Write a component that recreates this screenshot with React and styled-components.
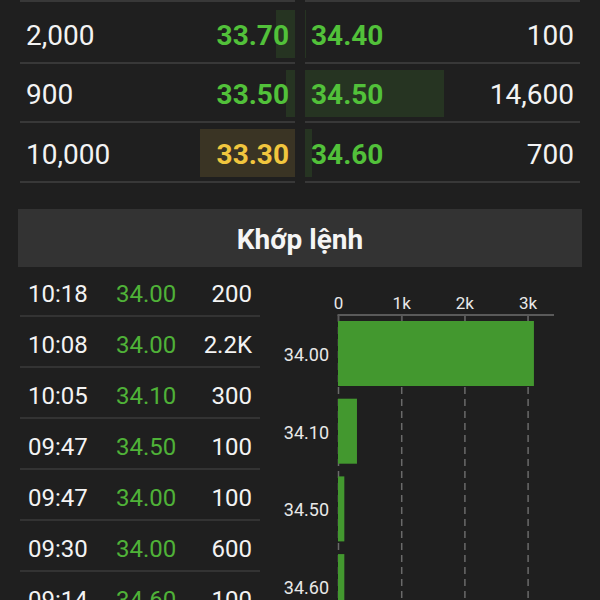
import React from "react";
import styled, { createGlobalStyle } from "styled-components";

const GlobalStyle = createGlobalStyle`
  *, *::before, *::after {
    box-sizing: border-box;
  }
  html, body {
    margin: 0;
    padding: 0;
    background: #1f1f1f;
    font-family: Roboto, "Noto Sans", sans-serif;
    overflow: hidden;
  }
`;

const colors = {
  bg: "#1f1f1f",
  line: "#383838",
  white: "#f3f3f3",
  green: "#52c13a",
  tradeGreen: "#4fb238",
  yellow: "#f1c63e",
  bidBar: "#263422",
  warnBar: "#3a3424",
  header: "#333333",
  bar: "#43982f",
};

const book = [
  { bidVol: 2000, bid: "33.70", ask: "34.40", askVol: 100 },
  { bidVol: 900, bid: "33.50", ask: "34.50", askVol: 14600 },
  { bidVol: 10000, bid: "33.30", ask: "34.60", askVol: 700, ref: true },
];

const trades = [
  ["10:18", "34.00", "200"],
  ["10:08", "34.00", "2.2K"],
  ["10:05", "34.10", "300"],
  ["09:47", "34.50", "100"],
  ["09:47", "34.00", "100"],
  ["09:30", "34.00", "600"],
  ["09:14", "34.60", "100"],
];

const volumeByPrice = [
  { price: "34.00", vol: 3100 },
  { price: "34.10", vol: 300 },
  { price: "34.50", vol: 100 },
  { price: "34.60", vol: 100 },
];

const fmt = (n) => n.toLocaleString("en-US");

const Page = styled.div`
  width: 600px;
  height: 600px;
  overflow: hidden;
  padding: 0 20px;
  background: ${colors.bg};
  color: ${colors.white};
`;

const Book = styled.div`
  display: grid;
  grid-template-columns: 1fr 1fr;
  column-gap: 10px;
`;

const Side = styled.div`
  border-top: 2px solid ${colors.line};
  padding-top: 2px;
`;

const BookRow = styled.div`
  position: relative;
  height: 59.5px;
  border-bottom: 2px solid ${colors.line};
  display: flex;
  align-items: center;
  justify-content: space-between;
  padding: 5px 6px 0;
  font-size: 28px;
`;

const DepthBar = styled.div`
  position: absolute;
  top: 6px;
  bottom: 4px;
  ${(p) => (p.$side === "bid" ? "right: 0;" : "left: 0;")}
  background: ${(p) => (p.$ref ? colors.warnBar : colors.bidBar)};
`;

const Vol = styled.span`
  position: relative;
  color: ${colors.white};
`;

const Price = styled.span`
  position: relative;
  font-weight: 700;
  color: ${(p) => (p.$ref ? colors.yellow : colors.green)};
`;

const SectionTitle = styled.div`
  margin: 26px -2px 0;
  height: 58px;
  background: ${colors.header};
  display: flex;
  align-items: center;
  justify-content: center;
  padding-top: 3px;
  font-size: 28px;
  font-weight: 700;
  color: #f5f5f5;
`;

const Body = styled.div`
  display: flex;
`;

const TradeList = styled.div`
  width: 240px;
  flex: none;
`;

const TradeRow = styled.div`
  height: 50.9px;
  border-bottom: 2px solid #333333;
  display: grid;
  grid-template-columns: 88px 1fr auto;
  align-items: center;
  padding: 7px 8px 0;
  font-size: 24px;
`;

const TradeTime = styled.span`
  color: ${colors.white};
`;

const TradePrice = styled.span`
  color: ${colors.tradeGreen};
`;

const TradeVol = styled.span`
  color: ${colors.white};
  text-align: right;
`;

const Chart = styled.svg`
  display: block;
  flex: none;
  font-family: Roboto, "Noto Sans", sans-serif;
`;

function VolumeChart() {
  const x0 = 78.5;
  const perK = 63.2;
  const ticks = [0, 1, 2, 3];
  return (
    <Chart width="320" height="333" viewBox="0 0 320 333">
      {ticks.map((t) => (
        <text
          key={t}
          x={x0 + t * perK}
          y="42"
          textAnchor="middle"
          fontSize="17"
          fill="#e8e8e8"
        >
          {t === 0 ? "0" : `${t}k`}
        </text>
      ))}
      {ticks.map((t) => (
        <line
          key={`g${t}`}
          x1={x0 + t * perK}
          x2={x0 + t * perK}
          y1="48"
          y2="333"
          stroke="#6a6a6a"
          strokeWidth="1.5"
          strokeDasharray="7 5"
        />
      ))}
      <line x1={x0 - 1} x2="294" y1="48" y2="48" stroke="#5a5a5a" strokeWidth="2" />
      {ticks.map((t) => (
        <line
          key={`t${t}`}
          x1={x0 + t * perK}
          x2={x0 + t * perK}
          y1="48"
          y2="54"
          stroke="#5a5a5a"
          strokeWidth="1.5"
        />
      ))}
      {volumeByPrice.map((d, i) => {
        const top = 54 + i * 77.7;
        return (
          <g key={d.price}>
            <rect
              x={x0 - 0.5}
              y={top}
              width={(d.vol / 1000) * perK}
              height="65"
              fill={colors.bar}
            />
            <text
              x="69"
              y={top + 40}
              textAnchor="end"
              fontSize="18"
              fill="#e8e8e8"
            >
              {d.price}
            </text>
          </g>
        );
      })}
    </Chart>
  );
}

export default function App() {
  return (
    <Page>
      <GlobalStyle />
      <Book>
        <Side>
          {book.map((r) => (
            <BookRow key={r.bid}>
              <DepthBar $side="bid" $ref={r.ref} style={{ width: r.bidVol * 0.0095 }} />
              <Vol>{fmt(r.bidVol)}</Vol>
              <Price $ref={r.ref}>{r.bid}</Price>
            </BookRow>
          ))}
        </Side>
        <Side>
          {book.map((r) => (
            <BookRow key={r.ask}>
              <DepthBar $side="ask" style={{ width: r.askVol * 0.0095 }} />
              <Price>{r.ask}</Price>
              <Vol>{fmt(r.askVol)}</Vol>
            </BookRow>
          ))}
        </Side>
      </Book>
      <SectionTitle>Khớp lệnh</SectionTitle>
      <Body>
        <TradeList>
          {trades.map(([t, p, v], i) => (
            <TradeRow key={i}>
              <TradeTime>{t}</TradeTime>
              <TradePrice>{p}</TradePrice>
              <TradeVol>{v}</TradeVol>
            </TradeRow>
          ))}
        </TradeList>
        <VolumeChart />
      </Body>
    </Page>
  );
}
